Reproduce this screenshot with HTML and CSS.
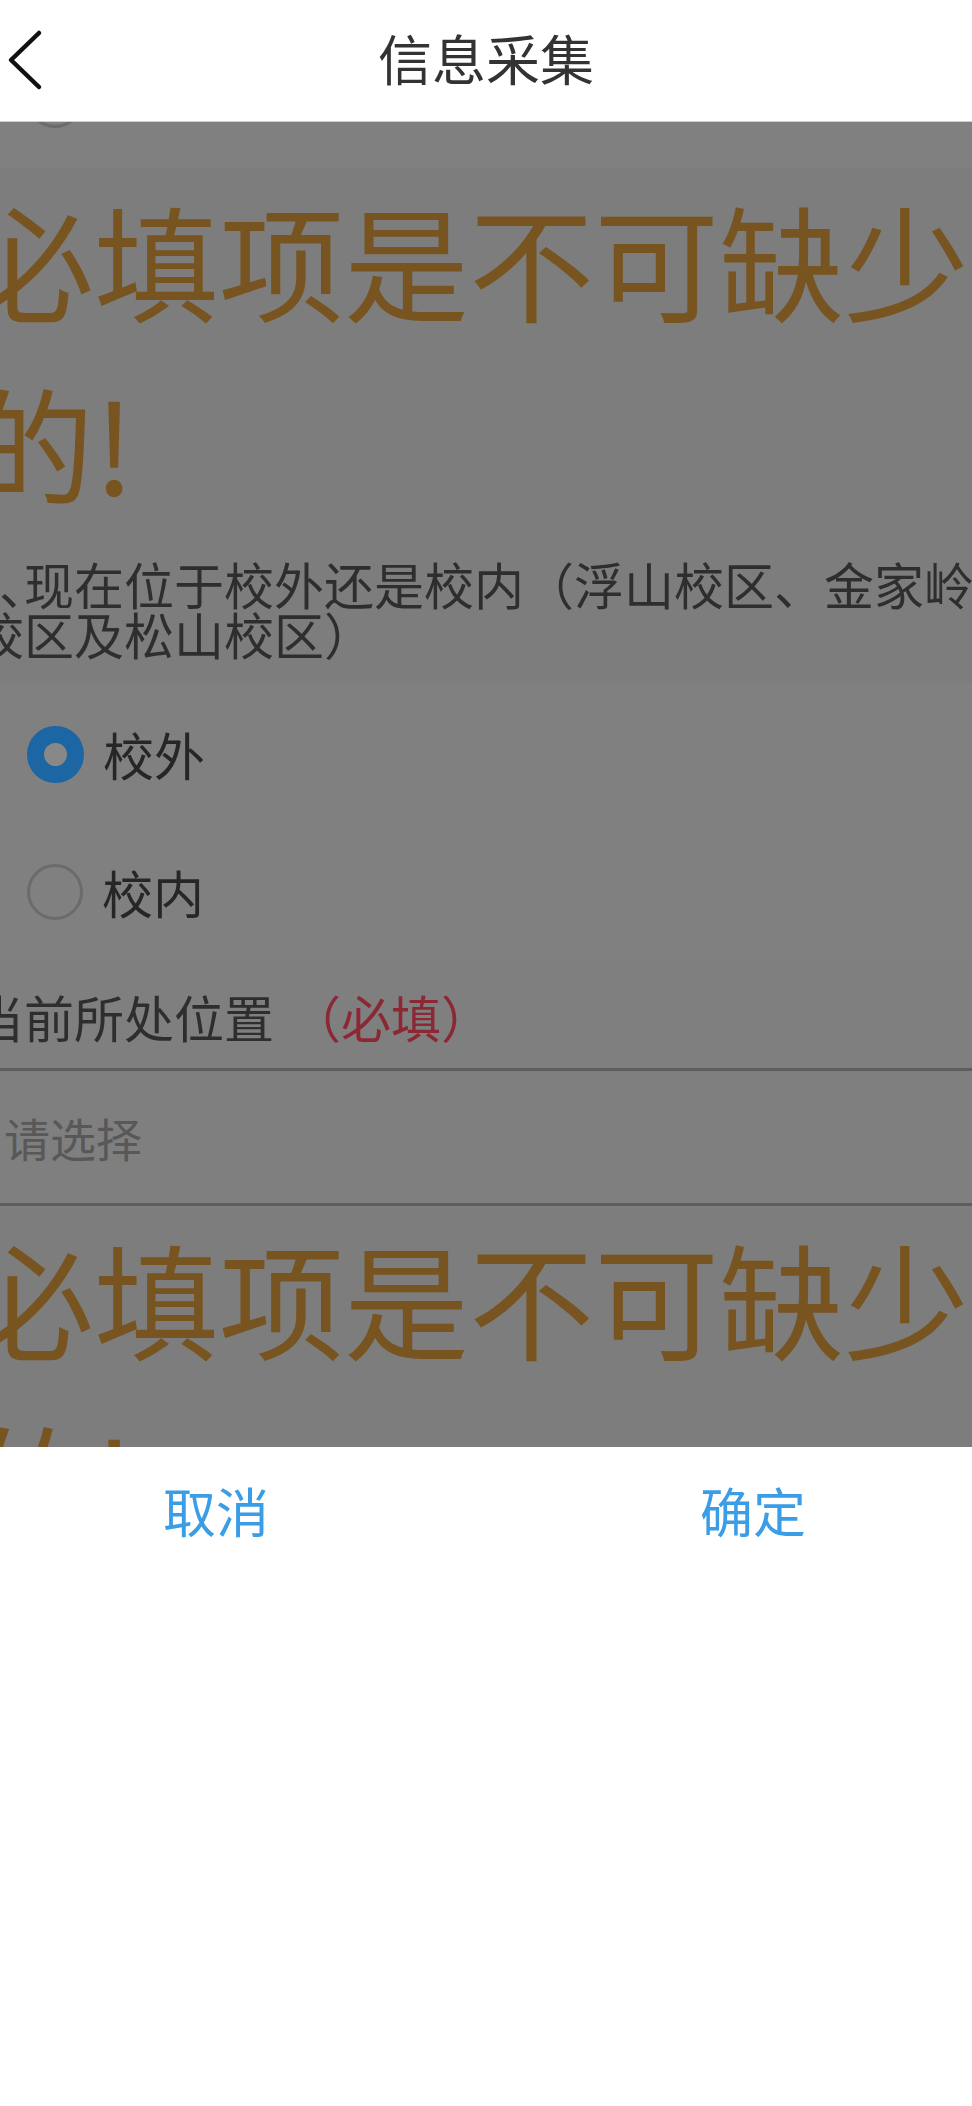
FILE: index.html
```html
<!DOCTYPE html>
<html lang="zh-CN">
<head>
<meta charset="utf-8">
<title>信息采集</title>
<link rel="stylesheet" href="styles.css">
</head>
<body>
<div class="app">
  <header class="topbar">
    <div class="topbar-left">
      <svg class="back" width="50" height="120" viewBox="0 0 50 120" aria-hidden="true">
        <polyline points="39,32 11,59 39,86" fill="none" stroke="#111" stroke-width="4.5" stroke-linecap="round" stroke-linejoin="round"/>
      </svg>
    </div>
    <h1 class="title">信息采集</h1>
    <div class="topbar-right"></div>
  </header>

  <main class="viewport">
    <div class="form">
      <div class="option option-prev">
        <span class="radio"></span>
      </div>

      <p class="error">必填项是不可缺少的!</p>

      <p class="question"><span class="halt">、</span>现在位于校外还是校内（浮山校区、金家岭校区及松山校区）</p>

      <div class="options">
        <div class="option">
          <span class="radio checked"></span>
          <span class="option-label">校外</span>
        </div>
        <div class="option">
          <span class="radio"></span>
          <span class="option-label">校内</span>
        </div>
      </div>

      <div class="field-label">当前所处位置<span class="req">（必填）</span></div>
      <div class="field-input">请选择</div>

      <p class="error">必填项是不可缺少的!</p>
    </div>
  </main>

  <section class="sheet">
    <div class="toolbar">
      <span class="tool-btn">取消</span>
      <span class="tool-btn">确定</span>
    </div>
  </section>
</div>
</body>
</html>
```

FILE: styles.css
```css
* {
  box-sizing: border-box;
}

html, body {
  margin: 0;
  padding: 0;
}

body {
  width: 972px;
  height: 2106px;
  overflow: hidden;
  background: #ffffff;
  font-family: "Noto Sans CJK SC", "Noto Sans", sans-serif;
}

.app {
  display: flex;
  flex-direction: column;
  width: 972px;
  height: 2106px;
}

/* ---------- top bar ---------- */
.topbar {
  flex: 0 0 122px;
  height: 122px;
  min-height: 0;
  overflow: hidden;
  display: grid;
  grid-template-columns: 1fr auto 1fr;
  align-items: center;
  background: #ffffff;
  border-bottom: 1px solid #cfcfcf;
}

.topbar-left {
  display: flex;
  align-items: center;
}

.back {
  display: block;
}

.title {
  margin: 0;
  padding-bottom: 6px;
  font-size: 54px;
  font-weight: 400;
  line-height: 1;
  color: #333333;
}

/* ---------- dimmed, scrolled form ---------- */
.viewport {
  flex: 0 0 1325px;
  min-height: 0;
  overflow: hidden;
  background: #7f7f7f;
}

.form {
  width: 1020px;
  margin: -91px 0 0 -26px;
}

.option {
  display: flex;
  align-items: center;
  gap: 19px;
  height: 138px;
  padding-left: 53px;
}

.option-prev {
  height: 137px;
  background: #808080;
}

.radio {
  flex: 0 0 56px;
  width: 56px;
  height: 56px;
  border-radius: 50%;
  border: 3px solid #6b6b6b;
}

.radio.checked {
  flex-basis: 57px;
  width: 57px;
  height: 57px;
  border: 17px solid #1b66a3;
  background: #888888;
}

.option-label {
  font-size: 51px;
  line-height: 1;
  color: #262626;
}

.error {
  margin: 0 0 0 -5px;
  font-size: 125px;
  line-height: 182px;
  color: #785420;
  background: #7d7d7d;
}

.question {
  margin: 0;
  padding: 26px 0 25px;
  text-indent: 25px;
  font-size: 50px;
  line-height: 50px;
  color: #2e2e2e;
  background: #7d7d7d;
}

.halt {
  letter-spacing: -25px;
}

.options {
  padding-top: 2px;
  background: #808080;
}

.field-label {
  display: flex;
  align-items: center;
  height: 110px;
  padding: 2px 0 0 0;
  font-size: 50px;
  line-height: 1;
  color: #2e2e2e;
  border-bottom: 3px solid #5e5e5e;
}

.req {
  margin-left: 17px;
  color: #8c2734;
}

.field-input {
  display: flex;
  align-items: center;
  height: 135px;
  padding-left: 30px;
  font-size: 46px;
  line-height: 1;
  color: #585858;
  border-bottom: 3px solid #5e5e5e;
}

/* ---------- bottom picker sheet ---------- */
.sheet {
  flex: 1 1 auto;
  min-height: 0;
  background: #ffffff;
}

.toolbar {
  display: flex;
  justify-content: space-between;
  align-items: center;
  height: 126px;
  padding: 0 166px 0 163px;
}

.tool-btn {
  font-size: 53px;
  line-height: 1;
  color: #3b9de6;
}
```
